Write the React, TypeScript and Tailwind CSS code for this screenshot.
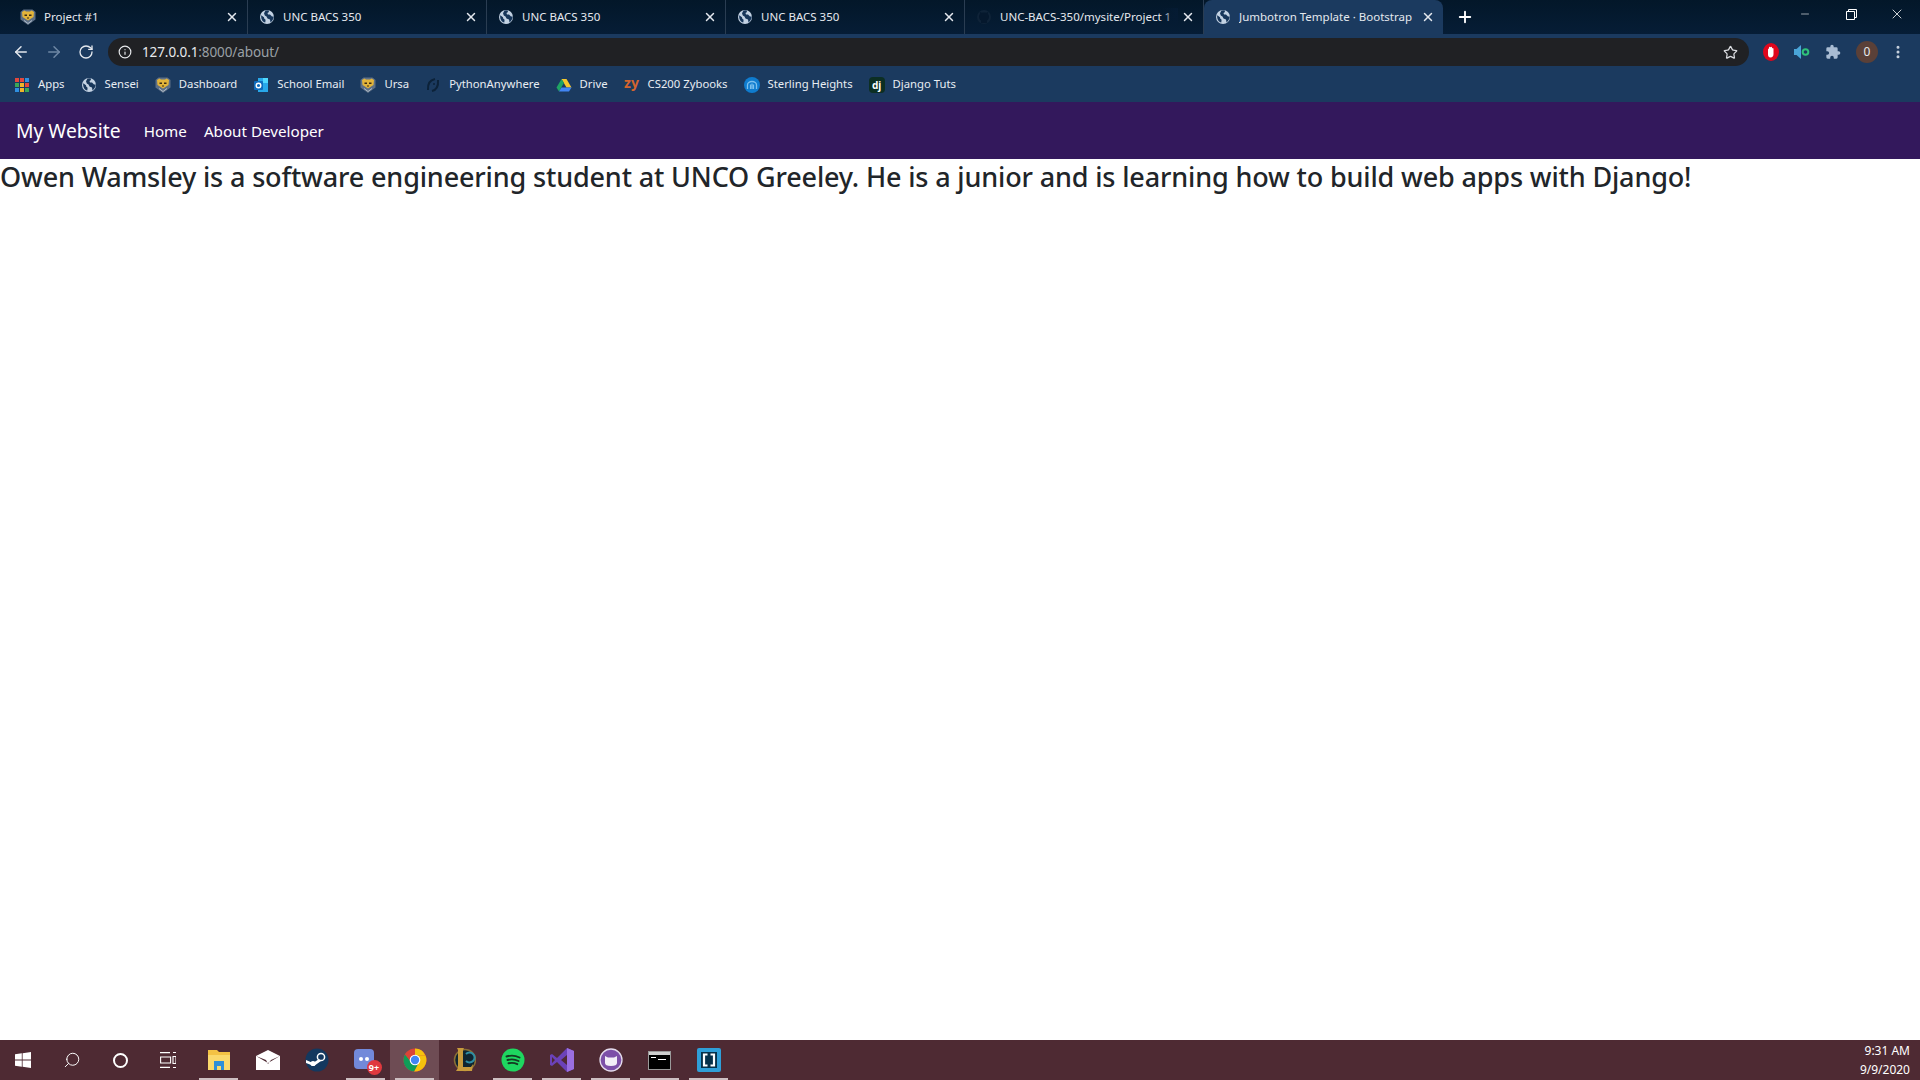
import { ReactNode } from 'react'
import { ArrowLeft, ArrowRight, RotateCw, Info, Star, X, Plus, Minus, Search, EllipsisVertical } from 'lucide-react'

const uiFont = { fontFamily: '"Noto Sans", "Open Sans", sans-serif' }

const Globe = ({ tint = '#c3d2e3', dark = '#17365a' }: { tint?: string; dark?: string }) => (
  <svg width="16" height="16" viewBox="0 0 16 16">
    <circle cx="8" cy="8" r="7" fill={tint} />
    <path d="M2.2 6.2 5 8.2l.2 1.4 1.4 1.2-.3 2.8C3.800 13 1.800 10.500 2.200 6.200Z" fill={dark} />
    <path d="M6.500 1.400 9.500 1.300 10 3 8.500 4 9 5.500 11 5.500 13 7.500 14.800 7.500C14.600 10 13.300 12 11.500 13.400L11 10.500 8.500 9.500 7.500 7.500 5.800 6.500 5 4.200Z" fill={dark} />
  </svg>
)

const Bear = () => (
  <svg width="16" height="16" viewBox="0 0 16 16">
    <path d="M.5 3 3.500.5h9L15.500 3v7.500L8 16 .5 10.500Z" fill="#5d6f86" />
    <path d="M2 3 4.500 1.500l1.500 1h4l1.500-1L14 3l-.5 5L8 11.500 2.500 8Z" fill="#e3b53a" />
    <path d="M4.500 5.500h2.500v1.500H4.500ZM9 5.500h2.500v1.500H9ZM6.800 8.500h2.400L8 10.200Z" fill="#3a2b14" />
    <path d="M4 11.500 8 14.500l4-3" fill="none" stroke="#c7d0da" strokeWidth=".8" />
  </svg>
)

const GitHubDim = () => (
  <svg width="16" height="16" viewBox="0 0 16 16">
    <circle cx="8" cy="8" r="7" fill="#0f2338" />
    <path d="M5 14V11.500C3.500 10.500 3 9 3 7.500 3 6.500 3.500 5.500 4 5l-.2-2 2 .8c1.400-.4 3-.4 4.400 0l2-.8L12 5c.5.5 1 1.500 1 2.500 0 1.500-.5 3-2 4V14Z" fill="#05182d" />
  </svg>
)

const AppsGrid = () => {
  const colors = ['#e2483d', '#e2483d', '#2f8fe0', '#3aa757', '#f0b429', '#e2483d', '#2f8fe0', '#f0b429', '#3aa757']
  return (
    <div className="grid grid-cols-3 gap-[1px] w-[14px] h-[14px]">
      {colors.map((c, i) => (
        <div key={i} style={{ backgroundColor: c }} />
      ))}
    </div>
  )
}

const Outlook = () => (
  <svg width="16" height="16" viewBox="0 0 16 16">
    <rect x="5" y="1" width="10" height="14" fill="#28a8ea" />
    <rect x="10" y="1" width="5" height="5" fill="#50d9ff" />
    <rect x="1" y="4" width="9" height="9" rx="1" fill="#0f6cbd" />
    <circle cx="5.500" cy="8.500" r="2.300" fill="none" stroke="#fff" strokeWidth="1.400" />
  </svg>
)

const PyAnywhere = () => (
  <svg width="16" height="16" viewBox="0 0 16 16" fill="none">
    <path d="M10 2C5 3 2.500 7 3 13" stroke="#0c2239" strokeWidth="2" />
    <path d="M7 14c4-1 6.500-5 6-11" stroke="#0c2239" strokeWidth="2" />
    <circle cx="9" cy="7" r="1" fill="#0c2239" />
  </svg>
)

const Drive = () => (
  <svg width="16" height="16" viewBox="0 0 16 16">
    <path d="M5.500 2h5l5 8.500h-5Z" fill="#f7c62e" />
    <path d="M5.500 2 .5 10.500 3 14.500l5-8.700Z" fill="#1fa463" />
    <path d="M5.500 10.500h10L13 14.500H3Z" fill="#4285f4" />
  </svg>
)

const Zy = () => <span className="w-4 -translate-y-[2px] text-center text-[14px] font-bold leading-none text-[#d5642e]">zy</span>

const Sterling = () => (
  <svg width="16" height="16" viewBox="0 0 16 16">
    <circle cx="8" cy="8" r="8" fill="#0f7ccf" />
    <path d="M3.500 12V8c0-2 2-3.500 4.500-3.500s4.500 1.500 4.500 3.500v4" fill="none" stroke="#7cc0ee" strokeWidth="1.300" />
    <path d="M6.500 12V7.500M9.500 12V7.500M8 12V6.500" stroke="#7cc0ee" strokeWidth="1.200" />
  </svg>
)

const Dj = () => (
  <span className="flex h-4 w-4 items-center justify-center rounded-sm bg-[#0c2f23] text-[10px] font-bold leading-none text-white">dj</span>
)

const tabs: { title: string; icon: ReactNode; active?: boolean; fade?: boolean }[] = [
  { title: 'Project #1', icon: <Bear /> },
  { title: 'UNC BACS 350', icon: <Globe /> },
  { title: 'UNC BACS 350', icon: <Globe /> },
  { title: 'UNC BACS 350', icon: <Globe /> },
  { title: 'UNC-BACS-350/mysite/Project 1', icon: <GitHubDim />, fade: true },
  { title: 'Jumbotron Template · Bootstrap', icon: <Globe />, active: true },
]

const bookmarks: { label: string; icon: ReactNode }[] = [
  { label: 'Apps', icon: <AppsGrid /> },
  { label: 'Sensei', icon: <Globe /> },
  { label: 'Dashboard', icon: <Bear /> },
  { label: 'School Email', icon: <Outlook /> },
  { label: 'Ursa', icon: <Bear /> },
  { label: 'PythonAnywhere', icon: <PyAnywhere /> },
  { label: 'Drive', icon: <Drive /> },
  { label: 'CS200 Zybooks', icon: <Zy /> },
  { label: 'Sterling Heights', icon: <Sterling /> },
  { label: 'Django Tuts', icon: <Dj /> },
]

const taskIcons: { icon: ReactNode; running?: boolean; selected?: boolean }[] = [
  {
    icon: (
      <svg width="16" height="16" viewBox="0 0 16 16" fill="#fff">
        <path d="M0 2.300 6.800 1.300V7.600H0ZM7.600 1.200 16 0V7.600H7.600ZM0 8.400H6.800V14.700L0 13.700ZM7.600 8.400H16V16L7.600 14.800Z" />
      </svg>
    ),
  },
  { icon: <Search size={18} color="#fff" strokeWidth={1.3} className="-scale-x-100" /> },
  { icon: <div className="h-[15px] w-[15px] rounded-full border-2 border-white" /> },
  {
    icon: (
      <svg width="16" height="16" viewBox="0 0 16 16" fill="none" stroke="#fff" strokeWidth="1.100" className="-ml-[3px]">
        <path d="M0 .6h10M0 15.400h10M.6 5h10v6H.6ZM13 .5h3M13 15.500h3M13 4.500h3v7h-3Z" />
      </svg>
    ),
  },
  {
    running: true,
    icon: (
      <svg width="24" height="20" viewBox="0 0 24 20">
        <path d="M1 0h9l2 2h11v18H1Z" fill="#f4c244" />
        <path d="M1 5h22v15H1Z" fill="#fbd96c" />
        <path d="M7 11h10v9h-3v-4h-4v4H7Z" fill="#2f8fd8" />
      </svg>
    ),
  },
  {
    icon: (
      <svg width="24" height="20" viewBox="0 0 24 20">
        <path d="M0 6 12 0l12 6v14H0Z" fill="#fff" />
        <path d="M0 6l12 7 12-7-9 4-3 4-2-4Z" fill="#4e2a33" />
      </svg>
    ),
  },
  {
    icon: (
      <svg width="24" height="24" viewBox="0 0 24 24">
        <circle cx="12" cy="12" r="11.500" fill="#14385f" />
        <circle cx="16" cy="9" r="3.600" fill="none" stroke="#fff" strokeWidth="1.500" />
        <circle cx="8" cy="15.500" r="2.600" fill="#fff" />
        <path d="M1 12l7 3 6-4 2 2-7 5-8-3Z" fill="#fff" />
      </svg>
    ),
  },
  {
    running: true,
    icon: (
      <div className="relative h-6 w-6">
        <svg width="22" height="22" viewBox="0 0 22 22">
          <rect width="20" height="20" y="1" rx="4" fill="#7289da" />
          <circle cx="7" cy="11" r="2" fill="#fff" />
          <circle cx="13" cy="11" r="2" fill="#fff" />
        </svg>
        <span className="absolute -bottom-[3px] -right-[4px] flex h-[15px] w-[15px] items-center justify-center rounded-full bg-[#e0393e] text-[9px] font-bold leading-none text-white">9+</span>
      </div>
    ),
  },
  {
    running: true,
    selected: true,
    icon: (
      <svg width="24" height="24" viewBox="0 0 24 24">
        <circle cx="12" cy="12" r="11.500" fill="#db4437" />
        <path d="M12 .5A11.500 11.500 0 0 1 22.500 7.500H12Z" fill="#f4c20d" />
        <path d="M22.500 7.500A11.500 11.500 0 0 1 11 23.500L17 12 12 7.500Z" fill="#f4c20d" />
        <path d="M1.900 6.500A11.500 11.500 0 0 0 11 23.500L15 16 8 14Z" fill="#0f9d58" />
        <circle cx="12" cy="12" r="5.300" fill="#fff" />
        <circle cx="12" cy="12" r="4.200" fill="#4285f4" />
      </svg>
    ),
  },
  {
    icon: (
      <svg width="24" height="26" viewBox="0 0 24 26">
        <circle cx="13" cy="13" r="10.500" fill="#0f2530" stroke="#8a6f35" strokeWidth="1.500" />
        <path d="M14 14a5 5 0 1 0 0-7" fill="none" stroke="#2e8ea5" strokeWidth="2" />
        <path d="M5 1h7l-1 2v17h8l2-3-1 7H4l2-3V3Z" fill="#c89b3c" />
      </svg>
    ),
  },
  {
    running: true,
    icon: (
      <svg width="24" height="24" viewBox="0 0 24 24" fill="none">
        <circle cx="12" cy="12" r="11.500" fill="#1ed760" />
        <path d="M5.500 8.500c4-1.200 9-1 13 1M6.500 12c3.500-1 7.500-.8 11 1M7.500 15.300c3-.7 6-.5 8.800.9" stroke="#143a22" strokeWidth="1.900" strokeLinecap="round" />
      </svg>
    ),
  },
  {
    running: true,
    icon: (
      <svg width="24" height="24" viewBox="0 0 24 24">
        <path d="M17 0l7 3v18l-7 3-10-10-5 4-2-1V7l2-1 5 4Z" fill="#6b42b8" />
        <path d="M17 0l7 3v18l-7 3Z" fill="#9a6fe0" />
        <path d="M17 7l-6 5 6 5ZM2 9v6l3-3Z" fill="#4e2a33" />
      </svg>
    ),
  },
  {
    running: true,
    icon: (
      <svg width="24" height="24" viewBox="0 0 24 24">
        <circle cx="12" cy="12" r="11" fill="#7c4fa8" stroke="#e5dced" strokeWidth="1.300" />
        <path d="M6 8l3 1.500h6L18 8v7c0 2-2 3-6 3s-6-1-6-3Z" fill="#f2eef7" />
      </svg>
    ),
  },
  {
    running: true,
    icon: (
      <div className="h-[19px] w-[23px] border border-[#9a9a9a] bg-black">
        <div className="h-[3px] bg-[#cfcfcf]" />
        <div className="ml-[2px] mt-[2px] h-[1px] w-[5px] bg-white" />
        <div className="ml-[9px] mt-[1px] h-[1px] w-[8px] bg-white" />
      </div>
    ),
  },
  {
    running: true,
    icon: (
      <svg width="24" height="24" viewBox="0 0 24 24">
        <rect width="24" height="24" rx="2" fill="#2f9fd8" />
        <rect x="4" y="4" width="16" height="16" fill="#06314a" />
        <path d="M10.500 6.500H7v11h3.500M13.500 6.500H17v11h-3.500" fill="none" stroke="#fff" strokeWidth="2.200" />
      </svg>
    ),
  },
]

function Tab({ title, icon, active, fade }: { title: string; icon: ReactNode; active?: boolean; fade?: boolean }) {
  return (
    <div
      className={`flex h-[34px] w-[239px] shrink-0 items-center pb-[1px] pl-[11px] pr-2 ${
        active ? 'rounded-t-lg bg-[#1b3a5f]' : 'border-r border-[#2a3d52]'
      }`}
    >
      <span className="shrink-0">{icon}</span>
      <div className="relative ml-[8px] min-w-0 flex-1 overflow-hidden whitespace-nowrap text-[11.500px] text-[#e4e8ee]">
        {title}
        {fade && <div className="absolute inset-y-0 right-0 w-4 bg-gradient-to-r from-transparent to-[#051b33]" />}
      </div>
      <X size={14} strokeWidth={2.500} color="#e4e8ee" className="ml-[3px] shrink-0" />
    </div>
  )
}

export default function App() {
  return (
    <div className="flex h-screen w-full flex-col overflow-hidden bg-white" style={uiFont}>
      {/* tab strip */}
      <div className="flex h-[34px] shrink-0 items-end justify-between bg-gradient-to-b from-[#031729] to-[#061d36] pl-[9px]">
        <div className="flex items-end">
          {tabs.map((t, i) => (
            <Tab key={i} {...t} />
          ))}
          <Plus size={18} strokeWidth={2.500} color="#fff" className="mb-2 ml-[13px]" />
        </div>
        <div className="flex h-full items-start">
          <div className="flex h-[28px] w-[46px] items-center justify-center">
            <Minus size={12} color="#fff" strokeWidth={1.200} />
          </div>
          <div className="flex h-[28px] w-[46px] items-center justify-center">
            <svg width="11" height="11" viewBox="0 0 11 11" fill="none" stroke="#fff">
              <path d="M.5 2.500h8v8h-8ZM2.500 2.500V.5h8v8h-2" />
            </svg>
          </div>
          <div className="flex h-[28px] w-[46px] items-center justify-center">
            <X size={16} color="#fff" strokeWidth={1.200} />
          </div>
        </div>
      </div>

      {/* toolbar */}
      <div className="flex h-9 shrink-0 items-center bg-[#1b3a5f] pl-3">
        <ArrowLeft size={18} color="#e4e8ee" className="shrink-0" />
        <ArrowRight size={18} color="#6f88a5" className="ml-[15px] shrink-0" />
        <RotateCw size={16} color="#e4e8ee" className="ml-[15px] shrink-0" />
        <div className="ml-[14px] flex h-[28px] flex-1 items-center rounded-full bg-[#202124] pl-[10px] pr-[11px]">
          <Info size={14} color="#e8eaed" />
          <span className="ml-[10px] text-[13.500px] tracking-[-0.1px] text-[#e8eaed]">
            127.0.0.1<span className="text-[#9aa0a6]">:8000/about/</span>
          </span>
          <Star size={15} color="#dadce0" className="ml-auto" />
        </div>
        <div className="flex shrink-0 items-center gap-[15px] pl-[14px] pr-[14px]">
          <svg width="16" height="18" viewBox="0 0 16 18">
            <ellipse cx="8" cy="9" rx="8" ry="9" fill="#e0061c" />
            <path d="M5 7c0-2 1-2 1-.5V4.500c0-1 1.500-1 1.500 0 0-1 1.500-1 1.500 0v1c0-.8 1.500-.8 1.500.2V11c0 2-1 3.500-3 3.500S5 13 5 11Z" fill="#fff" />
          </svg>
          <svg width="16" height="16" viewBox="0 0 16 16">
            <path d="M0 5h2.500L7 1v14l-4.500-4H0Z" fill="#4aa5d8" />
            <circle cx="11.500" cy="8" r="3.800" fill="#2fc27a" />
            <circle cx="11.500" cy="8" r="1.800" fill="#1b3a5f" />
          </svg>
          <svg width="16" height="16" viewBox="0 0 24 24" fill="#a9bcd3">
            <path d="M20.500 11H19V7a2 2 0 0 0-2-2h-4V3.500a2.500 2.500 0 0 0-5 0V5H4a2 2 0 0 0-2 2v3.800h1.500a2.700 2.700 0 0 1 0 5.400H2V20a2 2 0 0 0 2 2h3.800v-1.500a2.700 2.700 0 0 1 5.400 0V22H17a2 2 0 0 0 2-2v-4h1.500a2.500 2.500 0 0 0 0-5Z" />
          </svg>
          <div className="flex h-[22px] w-[22px] items-center justify-center rounded-full bg-[#5a4038] text-xs text-[#e8eaed]">0</div>
          <EllipsisVertical size={16} color="#c9d3df" strokeWidth={2.500} className="-ml-[3px]" />
        </div>
      </div>

      {/* bookmarks bar */}
      <div className="flex h-8 shrink-0 items-center gap-4 bg-[#1b3a5f] pb-[3px] pl-[14px]">
        {bookmarks.map((b) => (
          <div key={b.label} className="flex items-center gap-2">
            <span className="flex h-4 w-4 items-center justify-center">{b.icon}</span>
            <span className="text-[11.300px] text-[#e8edf3]">{b.label}</span>
          </div>
        ))}
      </div>

      {/* page */}
      <nav className="flex h-[57px] shrink-0 items-center bg-[#33185c] px-4 pt-[2px] text-white">
        <a className="mr-[15px] text-[19.300px]">My Website</a>
        <a className="pl-2 pr-[9px] text-[15.200px]">Home</a>
        <a className="px-2 text-[15.200px]">About Developer</a>
      </nav>
      <main className="flex-1">
        <h3 className="pt-[1px] text-[27px] font-medium leading-[34px] tracking-[-0.15px] text-[#212529]">
          Owen Wamsley is a software engineering student at UNCO Greeley. He is a junior and is learning how to build web apps with Django!
        </h3>
      </main>

      {/* taskbar */}
      <div className="flex h-10 shrink-0 items-stretch justify-between bg-[#4e2a33]">
        <div className="-ml-[2px] flex">
          {taskIcons.map((t, i) => (
            <div
              key={i}
              className={`relative flex w-[49px] items-center justify-center ${t.selected ? 'bg-[#6e4c54]' : ''}`}
            >
              {t.icon}
              {t.running && <div className="absolute bottom-0 left-[5px] h-[2px] w-[39px] bg-[#cdbfc2]" />}
            </div>
          ))}
        </div>
        <div className="flex flex-col items-end justify-center pr-[10px] text-xs leading-[19px] text-white">
          <span>9:31 AM</span>
          <span>9/9/2020</span>
        </div>
      </div>
    </div>
  )
}
